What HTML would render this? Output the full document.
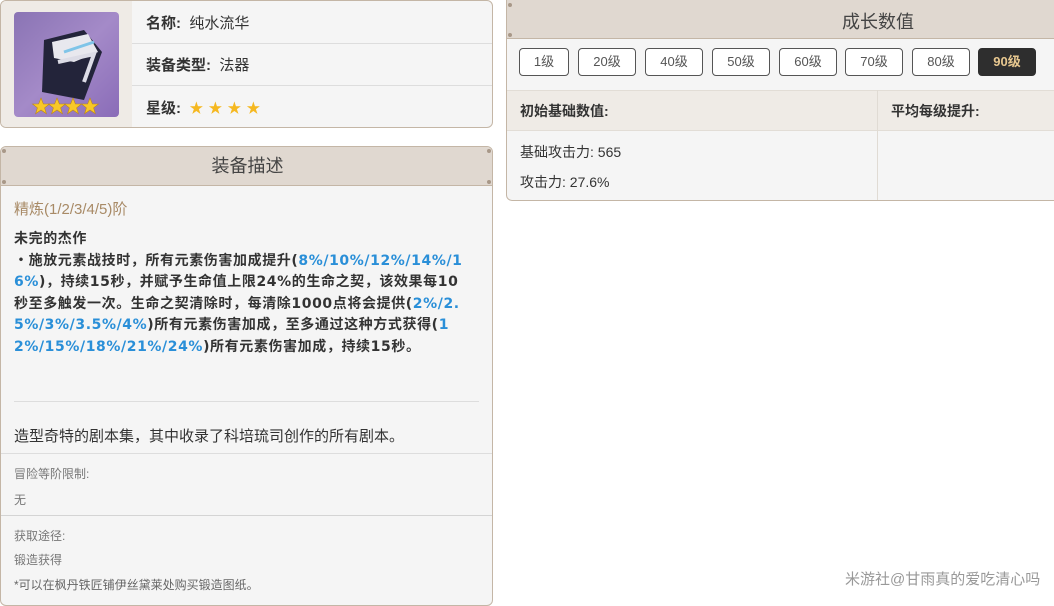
<!DOCTYPE html>
<html><head><meta charset="utf-8"><style>
*{margin:0;padding:0;box-sizing:border-box}
body{width:1054px;height:600px;background:#fff;font-family:"Liberation Sans","Noto Sans CJK SC",sans-serif;color:#333;position:relative;overflow:hidden}
.abs{position:absolute}
.card{position:absolute;border:1px solid #c4b6a6;border-radius:6px;background:#f5f5f5;overflow:hidden}
.lbl{font-weight:bold;font-size:15px}
.btn{position:absolute;top:48px;height:28px;border:1px solid #555;border-radius:4px;background:#fff;font-size:13px;color:#555;text-align:center;line-height:26px}
.b{color:#2a8fd8}
.dot{position:absolute;width:4px;height:4px;background:#a89888;border-radius:50%}
</style></head><body>

<div class="card" style="left:0;top:0;width:493px;height:128px">
  <div class="abs" style="left:0;top:0;width:131px;height:128px;background:#efebe6"></div>
  <div class="abs" style="left:13px;top:11px;width:105px;height:105px;border-radius:4px;background:linear-gradient(135deg,#8a74b4,#a48ac8 50%,#8a6cb8);overflow:hidden">
    <svg width="105" height="105" viewBox="0 0 105 105"><path d="M30 28 L70 18 L88 40 L70 88 L28 80 Z" fill="#23243a"/><path d="M38 30 L74 22 L84 40 L60 50 L40 46 Z" fill="#e8e8ee"/><path d="M50 40 L80 30" stroke="#7fc4e8" stroke-width="3"/><path d="M44 50 L80 42 L70 70" stroke="#dcdce6" stroke-width="4" fill="none"/>
    <g fill="#f8c828" stroke="#c08a10" stroke-width="0.6">
      <polygon points="27,86 29.4,92 35.5,92 30.6,95.8 32.4,101.8 27,98 21.6,101.8 23.4,95.8 18.5,92 24.6,92"/>
      <polygon points="43,86 45.4,92 51.5,92 46.6,95.8 48.4,101.8 43,98 37.6,101.8 39.4,95.8 34.5,92 40.6,92"/>
      <polygon points="59,86 61.4,92 67.5,92 62.6,95.8 64.4,101.8 59,98 53.6,101.8 55.4,95.8 50.5,92 56.6,92"/>
      <polygon points="76,86 78.4,92 84.5,92 79.6,95.8 81.4,101.8 76,98 70.6,101.8 72.4,95.8 67.5,92 73.6,92"/>
    </g></svg>
  </div>
  <div class="abs" style="left:131px;top:42px;width:362px;height:1px;background:#ddd"></div>
  <div class="abs" style="left:131px;top:84px;width:362px;height:1px;background:#ddd"></div>
  <div class="abs" style="left:145px;top:11px;font-size:15px"><span class="lbl">名称:</span>&nbsp;&nbsp;纯水流华</div>
  <div class="abs" style="left:145px;top:53px;font-size:15px"><span class="lbl">装备类型:</span>&nbsp;&nbsp;法器</div>
  <div class="abs" style="left:145px;top:96px;font-size:15px"><span class="lbl">星级:</span>&nbsp;&nbsp;<span style="color:#f5b820;font-size:14px;letter-spacing:5px">★★★★</span></div>
</div>

<div class="card" style="left:0;top:146px;width:493px;height:460px">
  <div class="abs" style="left:0;top:0;width:493px;height:39px;background:#e0d8d0;border-bottom:1px solid #c4b6a6;text-align:center;font-size:18px;line-height:39px;color:#444">装备描述</div>
  <div class="dot" style="left:1px;top:2px"></div><div class="dot" style="left:486px;top:2px"></div>
  <div class="dot" style="left:1px;top:33px"></div><div class="dot" style="left:486px;top:33px"></div>
  <div class="abs" style="left:13px;top:51px;font-size:15px;color:#a88a66">精炼(1/2/3/4/5)阶</div>
  <div class="abs" style="left:13px;top:82px;font-size:14px;font-weight:bold;line-height:21.5px;letter-spacing:0.6px;white-space:nowrap;font-family:'DejaVu Sans','Noto Sans CJK SC',sans-serif">未完的杰作<br>・施放元素战技时，所有元素伤害加成提升(<span class="b">8%/10%/12%/14%/1<br>6%</span>)，持续15秒，并赋予生命值上限24%的生命之契，该效果每10<br>秒至多触发一次。生命之契清除时，每清除1000点将会提供(<span class="b">2%/2.<br>5%/3%/3.5%/4%</span>)所有元素伤害加成，至多通过这种方式获得(<span class="b">1<br>2%/15%/18%/21%/24%</span>)所有元素伤害加成，持续15秒。</div>
  <div class="abs" style="left:13px;top:254px;width:465px;height:1px;background:#ddd"></div>
  <div class="abs" style="left:13px;top:278px;font-size:15px">造型奇特的剧本集，其中收录了科培琉司创作的所有剧本。</div>
  <div class="abs" style="left:0;top:306px;width:493px;height:1px;background:#ddd"></div>
  <div class="abs" style="left:13px;top:318px;font-size:12px;color:#777">冒险等阶限制:</div>
  <div class="abs" style="left:13px;top:344px;font-size:12px;color:#777">无</div>
  <div class="abs" style="left:0;top:368px;width:493px;height:1px;background:#d4d4d4"></div>
  <div class="abs" style="left:13px;top:380px;font-size:12px;color:#777">获取途径:</div>
  <div class="abs" style="left:13px;top:404px;font-size:12px;color:#777">锻造获得</div>
  <div class="abs" style="left:13px;top:429px;font-size:12px;color:#666">*可以在枫丹铁匠铺伊丝黛莱处购买锻造图纸。</div>
</div>

<div class="card" style="left:506px;top:-6px;width:560px;height:207px">
  <div class="abs" style="left:0;top:0;width:560px;height:44px;background:#e0d8d0;border-bottom:1px solid #c4b6a6"></div>
  <div class="abs" style="left:0;top:13px;width:742px;text-align:center;font-size:18px;color:#444">成长数值</div>
  <div class="dot" style="left:1px;top:8px"></div><div class="dot" style="left:1px;top:38px"></div>
  <div class="abs" style="left:0;top:95px;width:560px;height:41px;background:#efebe6;border-top:1px solid #e2ddd6;border-bottom:1px solid #e2ddd6"></div>
  <div class="abs" style="left:370px;top:95px;width:1px;height:112px;background:#e0dbd4"></div>
  <div class="abs" style="left:13px;top:106px;font-size:14px;font-weight:bold">初始基础数值:</div>
  <div class="abs" style="left:384px;top:106px;font-size:14px;font-weight:bold">平均每级提升:</div>
  <div class="abs" style="left:13px;top:147px;font-size:14px">基础攻击力: 565</div>
  <div class="abs" style="left:13px;top:177px;font-size:14px">攻击力: 27.6%</div>
</div>
<div class="btn" style="left:519px;width:50px">1级</div>
<div class="btn" style="left:578px;width:58px">20级</div>
<div class="btn" style="left:645px;width:58px">40级</div>
<div class="btn" style="left:712px;width:58px">50级</div>
<div class="btn" style="left:779px;width:58px">60级</div>
<div class="btn" style="left:845px;width:58px">70级</div>
<div class="btn" style="left:912px;width:58px">80级</div>
<div class="btn" style="left:978px;width:58px;background:#2e2e2e;border-color:#2e2e2e;color:#e8c890;font-weight:bold">90级</div>

<div class="abs" style="left:845px;top:568px;font-size:15px;color:#999;text-shadow:0 0 2px #fff">米游社@甘雨真的爱吃清心吗</div>
</body></html>
